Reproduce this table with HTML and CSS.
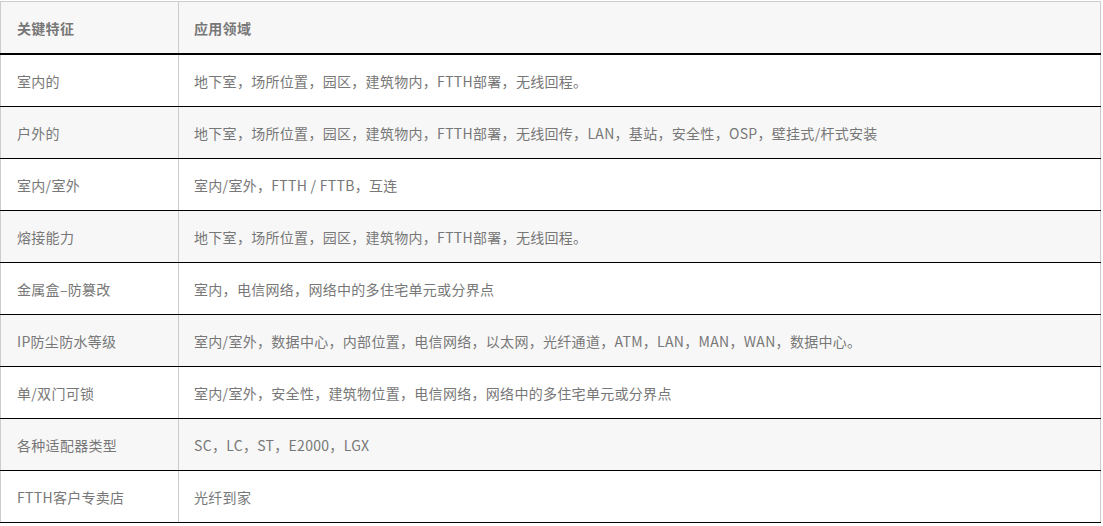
FILE: index.html
```html
<!DOCTYPE html>
<html lang="zh">
<head>
<meta charset="utf-8">
<link rel="stylesheet" href="styles.css">
</head>
<body>
<table class="spec">
  <thead>
    <tr><th class="c1">关键特征</th><th>应用领域</th></tr>
  </thead>
  <tbody>
    <tr><td class="c1">室内的</td><td>地下室，场所位置，园区，建筑物内，FTTH部署，无线回程。</td></tr>
    <tr><td class="c1">户外的</td><td>地下室，场所位置，园区，建筑物内，FTTH部署，无线回传，LAN，基站，安全性，OSP，壁挂式/杆式安装</td></tr>
    <tr><td class="c1">室内/室外</td><td>室内/室外，FTTH / FTTB，互连</td></tr>
    <tr><td class="c1">熔接能力</td><td>地下室，场所位置，园区，建筑物内，FTTH部署，无线回程。</td></tr>
    <tr><td class="c1">金属盒–防篡改</td><td>室内，电信网络，网络中的多住宅单元或分界点</td></tr>
    <tr><td class="c1">IP防尘防水等级</td><td>室内/室外，数据中心，内部位置，电信网络，以太网，光纤通道，ATM，LAN，MAN，WAN，数据中心。</td></tr>
    <tr><td class="c1">单/双门可锁</td><td>室内/室外，安全性，建筑物位置，电信网络，网络中的多住宅单元或分界点</td></tr>
    <tr><td class="c1">各种适配器类型</td><td>SC，LC，ST，E2000，LGX</td></tr>
    <tr><td class="c1">FTTH客户专卖店</td><td>光纤到家</td></tr>
  </tbody>
</table>
</body>
</html>
```
FILE: styles.css
```css
html, body {
  margin: 0;
  padding: 0;
  background: #fff;
}
body {
  padding-top: 1px;
  font-family: "Noto Sans CJK SC", "Noto Sans", sans-serif;
  font-size: 14px;
  color: #777;
}
.spec {
  border-collapse: collapse;
  width: 1101px;
  table-layout: fixed;
}
.spec th, .spec td {
  text-align: left;
  padding: 0 16px 0 16px;
  line-height: 20px;
  letter-spacing: 0.3px;
  border-left: 1px solid #ccc;
  border-right: 1px solid #ccc;
  vertical-align: middle;
}
.spec th + th, .spec td + td {
  padding-left: 15px;
}
.spec .c1 {
  width: 145px;
}
.spec thead th {
  background: #f7f7f7;
  height: 51px;
  font-weight: bold;
  color: #777;
  border-top: 1px solid #ccc;
  border-bottom: 2px solid #000;
}
.spec tbody td {
  height: 51px;
  border-bottom: 1px solid #000;
}
.spec tbody tr:nth-child(even) td {
  background: #f7f7f7;
}
```
